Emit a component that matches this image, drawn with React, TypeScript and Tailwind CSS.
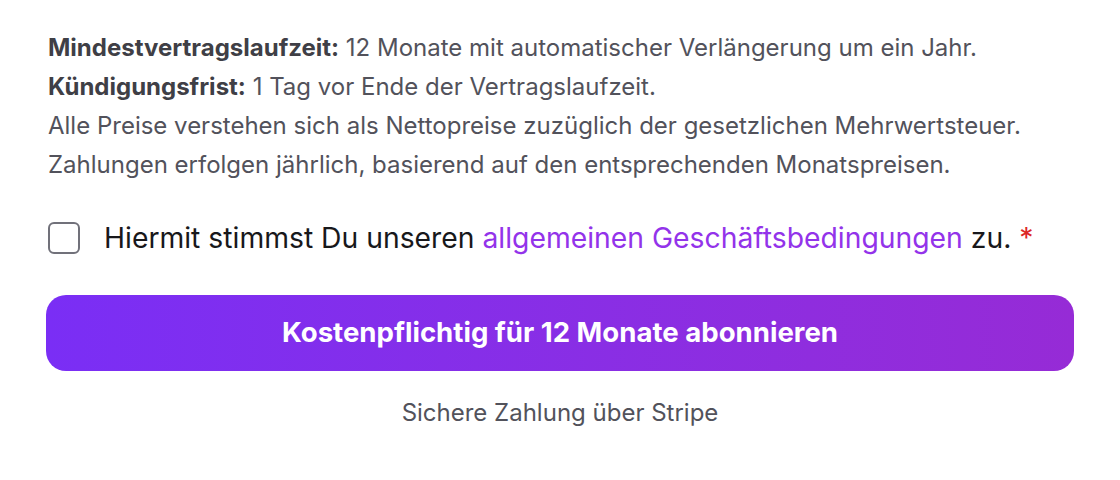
import React from 'react';

const App: React.FC = () => {
  return (
    <div className="w-[1120px] h-[480px] bg-white px-[46px] pt-[28px]" style={{ fontFamily: 'Inter, "Noto Sans", sans-serif' }}>
      {/* Contract terms */}
      <div className="pl-[2px] text-[24px] leading-[39px] text-[#52525b]">
        <p>
          <span className="font-bold text-[#3f3f46]">Mindestvertragslaufzeit:</span> 12 Monate mit automatischer Verlängerung um ein Jahr.
        </p>
        <p>
          <span className="font-bold text-[#3f3f46]">Kündigungsfrist:</span> 1 Tag vor Ende der Vertragslaufzeit.
        </p>
        <p>Alle Preise verstehen sich als Nettopreise zuzüglich der gesetzlichen Mehrwertsteuer.</p>
        <p>Zahlungen erfolgen jährlich, basierend auf den entsprechenden Monatspreisen.</p>
      </div>

      {/* Terms checkbox */}
      <label className="mt-[33px] flex items-center gap-[24px] pl-[2px] leading-[42px]">
        <span className="w-[32px] h-[32px] shrink-0 rounded-[6px] border-2 border-[#71717a] bg-white" />
        <span className="text-[28.3px] text-[#18181b]">
          Hiermit stimmst Du unseren <a className="text-[#9333ea]">allgemeinen Geschäftsbedingungen</a> zu.{' '}
          <span className="text-[#dc2626]">*</span>
        </span>
      </label>

      {/* Subscribe button */}
      <button className="mt-[36px] w-full h-[76px] rounded-[20px] bg-gradient-to-r from-[#7a2ef5] to-[#962bd6] text-white text-[27.6px] font-bold">
        Kostenpflichtig für 12 Monate abonnieren
      </button>

      <p className="mt-[24px] text-center text-[24px] leading-[36px] text-[#52525b]">Sichere Zahlung über Stripe</p>
    </div>
  );
};

export default App;
